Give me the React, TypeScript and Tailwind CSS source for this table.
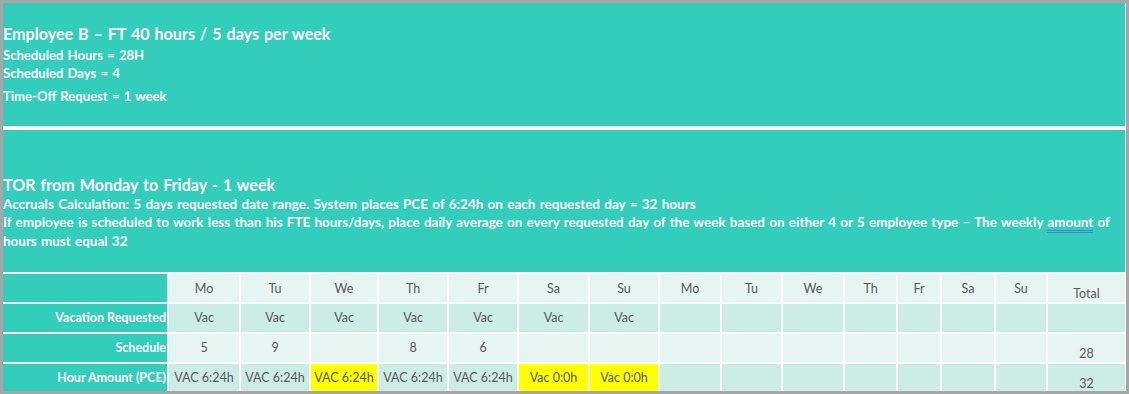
import React from 'react';

const cols = ['Mo', 'Tu', 'We', 'Th', 'Fr', 'Sa', 'Su', 'Mo', 'Tu', 'We', 'Th', 'Fr', 'Sa', 'Su'];

const vacation = ['Vac', 'Vac', 'Vac', 'Vac', 'Vac', 'Vac', 'Vac', '', '', '', '', '', '', ''];
const schedule = ['5', '9', '', '8', '6', '', '', '', '', '', '', '', '', ''];
const hours = ['VAC 6:24h', 'VAC 6:24h', 'VAC 6:24h', 'VAC 6:24h', 'VAC 6:24h', 'Vac 0:0h', 'Vac 0:0h', '', '', '', '', '', '', ''];
const yellow = [2, 5, 6];

const Label = ({ children }: { children: React.ReactNode }) => (
  <div className="bg-[#33cdbb] text-white font-bold text-[12.5px] flex items-center justify-end pr-[1px]">{children}</div>
);

const App = () => {
  return (
    <div
      className="w-[1129px] h-[394px] overflow-hidden border-[3px] border-[#a6a6a6] bg-white"
      style={{ fontFamily: 'Lato, "Open Sans", sans-serif' }}
    >
      <div className="h-full border-r border-white flex flex-col overflow-hidden">
        {/* employee summary */}
        <div className="h-[123px] shrink-0 bg-[#33cdbb] text-white font-bold pt-[21px] [word-spacing:1px]">
          <div className="text-[16.1px] leading-[20px]">Employee B – FT 40 hours / 5 days per week</div>
          <div className="text-[13.1px] leading-[18px] mt-[2px]">Scheduled Hours = 28H</div>
          <div className="text-[13.1px] leading-[18px]">Scheduled Days = 4</div>
          <div className="text-[13.1px] leading-[18px] mt-[5px]">Time-Off Request = 1 week</div>
        </div>

        <div className="h-[4px] shrink-0 bg-white" />

        {/* TOR explanation */}
        <div className="h-[142px] shrink-0 bg-[#33cdbb] text-white font-bold pt-[45px] [word-spacing:1px]">
          <div className="text-[16.1px] leading-[20px]">TOR from Monday to Friday - 1 week</div>
          <div className="text-[13.5px] leading-[18px] whitespace-nowrap">
            Accruals Calculation: 5 days requested date range. System places PCE of 6:24h on each requested day = 32 hours
          </div>
          <div className="text-[13.45px] leading-[19px] whitespace-nowrap">
            If employee is scheduled to work less than his FTE hours/days, place daily average on every requested day of the week based on either 4 or 5 employee type – The weekly{' '}
            <span className="border-b-[3px] border-double border-[#4a7fd8]">amount</span> of
            <br />
            hours must equal 32
          </div>
        </div>

        <div className="h-[2px] shrink-0 bg-white" />

        {/* week grid */}
        <div className="grid grid-cols-[164px_70px_68px_66px_68px_68px_69px_68px_60px_59px_60px_51px_42px_52px_50px_77px] auto-rows-[28px] gap-[2px] bg-white text-[12.5px] text-[#595959]">
          <div className="bg-[#33cdbb]" />
          {cols.map((d, i) => (
            <div key={'h' + i} className="bg-[#e6f5f2] flex items-center justify-center pt-[3px]">{d}</div>
          ))}
          <div className="bg-[#e6f5f2] flex items-end justify-center leading-[16px]">Total</div>

          <Label>Vacation Requested</Label>
          {vacation.map((v, i) => (
            <div key={'v' + i} className="bg-[#ccede6] flex items-center justify-center">{v}</div>
          ))}
          <div className="bg-[#ccede6]" />

          <Label>Schedule</Label>
          {schedule.map((v, i) => (
            <div key={'s' + i} className="bg-[#e6f5f2] flex items-center justify-center">{v}</div>
          ))}
          <div className="bg-[#e6f5f2] flex items-end justify-center leading-[16px]">28</div>

          <Label>Hour Amount (PCE)</Label>
          {hours.map((v, i) => (
            <div
              key={'p' + i}
              className={`flex items-center justify-center whitespace-nowrap ${yellow.includes(i) ? 'bg-[#ffff00]' : 'bg-[#ccede6]'}`}
            >
              {v}
            </div>
          ))}
          <div className="bg-[#ccede6] flex items-end justify-center leading-[16px]">32</div>
        </div>
      </div>
    </div>
  );
};

export default App;
